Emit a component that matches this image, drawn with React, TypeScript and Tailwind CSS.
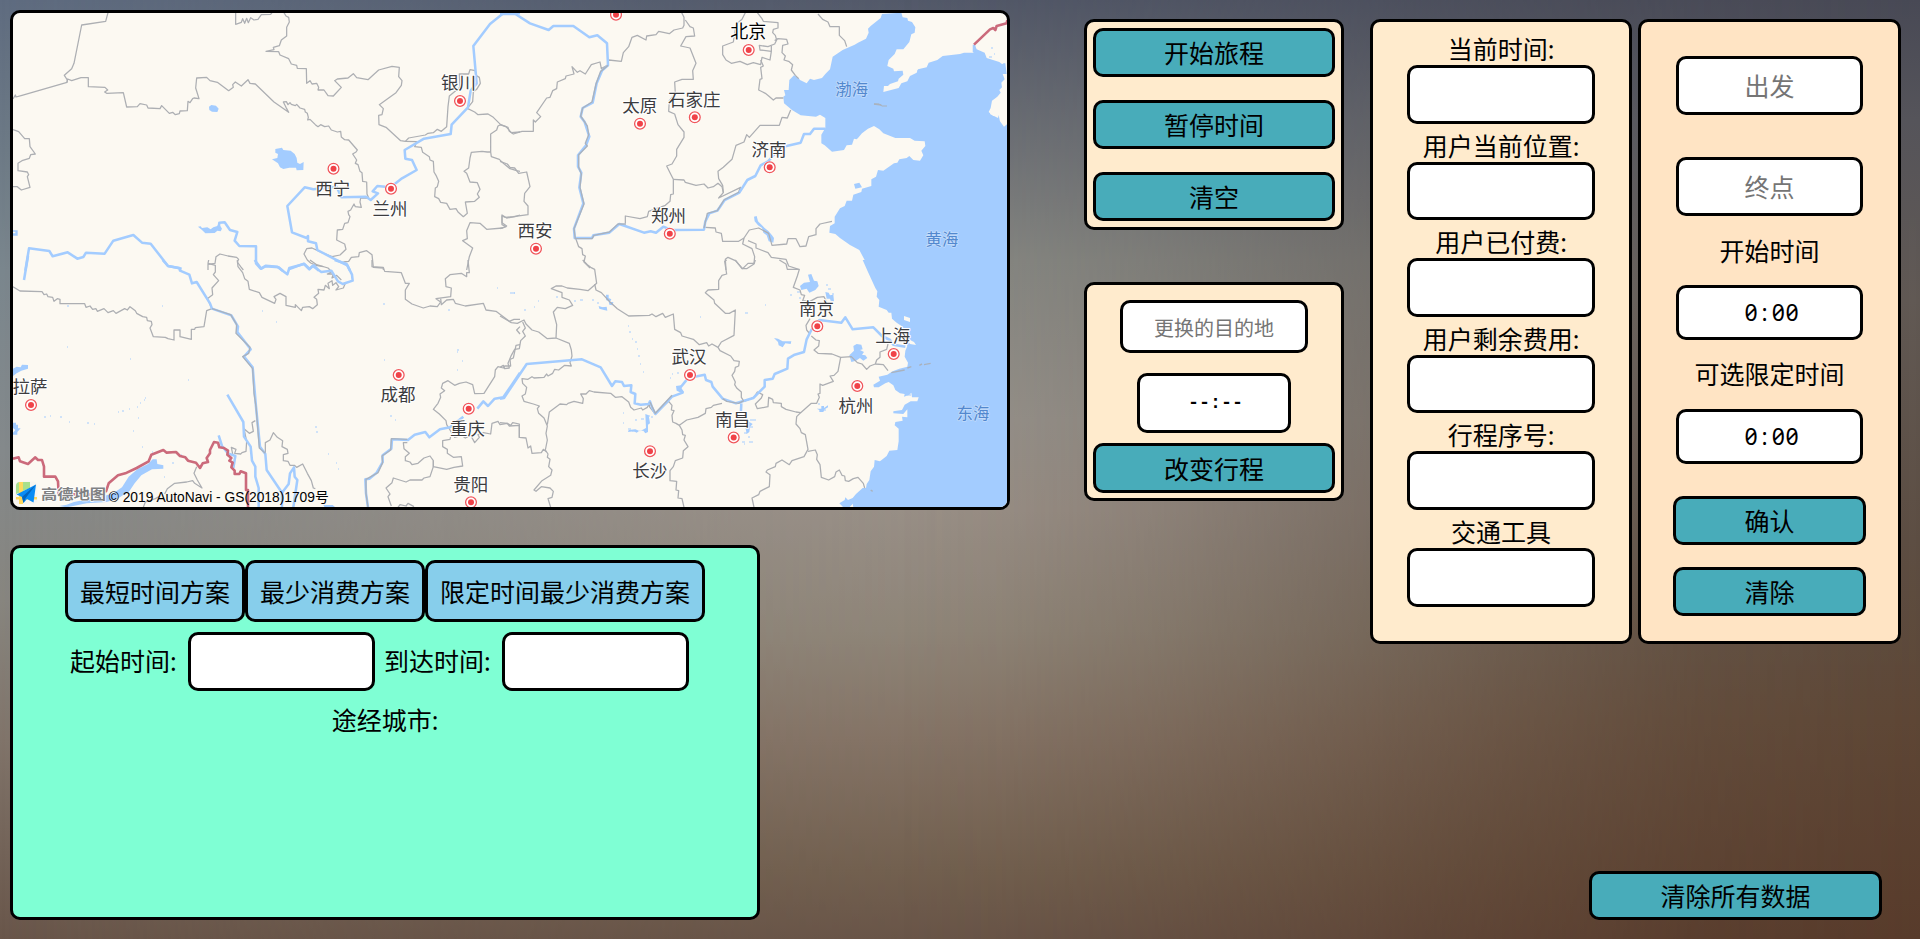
import React from "react";

const FONT = "font-['Noto_Sans','Noto_Sans_CJK_SC',sans-serif]";

/* ---------- Map data: every tile is drawn at 3x its size on screen ---------- */

type Tile = { at: string; sea: string[]; lakes: string[]; borders: string[]; rivers: string[]; shared: string[]; frontier: string[] };

const tiles: Tile[] = [
  {
    at: "translate(0 0) scale(0.333333)",
    sea: [],
    lakes: [
      "M627 320L634 315L648 317L656 326L652 336L636 335L628 330Z",
      "M826 447L846 443L850 450L872 452L884 462L890 474L892 488L900 492L911 486L910 510L890 511L888 503L868 503L850 507L840 502L834 490L816 478L832 474L834 462L826 458Z",
      "M594 680L602 679L606 684L622 682L632 688L640 682L652 678L656 670L666 686L662 694L652 692L644 699L616 700L606 690Z",
      "M39 691H53V707H39V700H46V695H39Z",
    ],
    borders: [
      "M324 38L317 64L245 75L222 190L215 206L193 226L202 240L201 247L66 286L48 291L46 285L39 297",
      "M201 247L203 237L215 242L243 233H265V260L315 262L323 270L314 276L320 280L370 278L380 321L412 320L420 311L440 315L444 324L480 326L485 317L508 340L518 337L526 344L538 341L540 333L562 332L564 304L570 308L578 296L582 294L597 296L587 264L590 234L620 232L630 242L652 247L686 272L700 262L698 254L706 246L724 258L744 239L750 250L766 252L822 306L866 337L858 322L850 306L859 305L864 314L870 308L874 313L886 317L890 313L900 324L914 328L916 336L922 340L925 352L923 360L930 358L946 374L954 380L962 374L974 380L986 378L994 390L1012 396L1022 394L1024 411L1034 419L1046 420L1072 450L1068 456L1058 462L1070 480L1066 490L1074 494L1080 514L1086 518L1088 544L1100 546L1101 582L1106 594L1082 594L1080 606L1084 622L1066 620L1062 612L1052 630L1044 634L1046 644L1050 650L1044 668L1034 670L1028 688L1012 690L1010 720L1034 732L1038 748L1020 765L996 770L966 758L936 744L920 746L912 762L922 780L932 789L948 796L970 800",
      "M707 38V73L724 67L728 56L734 70L740 55L745 68L752 53L762 60L774 58L784 44L812 43L816 38",
      "M852 38L858 48L866 52L868 66L860 82V108L844 120L838 137L820 142L822 149L798 154L836 155L840 165L866 176L874 192L890 196L892 205L919 206L920 250L930 242L936 252L950 250L956 262L954 270L972 270L984 287L1000 288L1024 262L1004 242L1012 237L1044 234L1060 221L1070 233L1104 239L1136 210L1176 199L1198 202L1196 230L1206 242L1204 256L1188 278L1166 294L1138 314L1150 326L1146 344L1136 346L1137 374L1158 382L1202 422L1216 424L1226 414L1276 405L1284 400L1300 398L1312 388L1324 394L1340 380L1344 320L1348 288L1380 262L1378 222H1406L1410 209L1426 212L1428 226L1438 232L1441 250L1430 268L1420 276L1418 305L1402 325L1424 336L1434 344L1464 342L1480 352L1502 374L1518 380L1534 398L1560 396",
      "M1216 424L1250 425L1244 440L1264 442L1268 457L1288 470L1290 480L1300 484L1302 516L1308 526L1316 544L1312 560L1306 564L1304 590L1316 596L1322 607L1340 610L1350 628L1368 626L1374 636L1390 650L1402 640L1396 606L1424 604L1438 592L1432 582L1440 568L1432 548L1410 546L1400 520L1392 514L1406 504L1410 474L1414 457L1446 454L1462 456L1472 456L1474 470L1498 478L1510 490L1530 506L1550 512L1560 514M1472 456V402L1490 390L1494 378L1502 374",
      "M1400 810L1408 770L1418 744L1388 722L1402 716L1400 692L1410 668L1440 670L1460 688L1508 684L1520 678L1506 668V645L1520 654L1545 650L1560 645",
      "M39 389L56 395L74 416L88 416L90 440L106 462L92 464L88 475L66 482L54 490V512L82 516L86 524L82 530L90 562L64 570L52 560H39",
      "M624 810V793L645 790L648 770L660 762L684 768L710 772L716 778L712 786L722 800L730 810",
      "M1030 786L1046 784L1054 772L1076 770L1078 758L1100 752L1116 764L1120 802L1150 804V810",
    ],
    rivers: [
      "M76 812L87 745L148 753L158 769L203 757L232 776L250 771L258 758L314 761L340 722L400 705L426 728L452 731L504 798L545 806",
      "M656 684L658 668L674 667L690 690L712 696L704 722L718 738L768 739V790L782 806L796 799L836 802L848 812M866 808L912 791L928 806L942 796L956 812",
      "M1050 812L1042 796L1000 775L952 750L948 730L924 724V708L920 714L876 697L862 618L914 562L940 568L1010 560L1024 592L1098 590L1112 600L1134 580L1118 574L1132 558L1172 562L1206 535L1250 510L1236 480L1216 476L1214 450L1272 416L1352 402L1355 374L1404 322L1412 272L1430 250L1420 138L1470 72L1510 40H1560",
    ],
    shared: [],
    frontier: [],
  },
  {
    at: "translate(500 0) scale(0.333333)",
    sea: [
      "M1204 38L1208 52L1222 54L1224 62L1236 66L1246 82L1244 98L1234 103L1228 126L1210 148H1190L1184 162L1166 180L1162 198L1180 206L1182 214L1208 212L1210 224L1196 236L1194 244L1170 252L1164 258L1152 258L1150 276L1196 264L1204 250L1222 244L1230 228L1250 218L1254 208L1280 202L1286 188L1312 180L1328 168L1380 162L1392 158H1420L1424 134L1430 148L1454 158L1460 174L1498 186L1506 192L1516 190L1520 222L1508 222L1514 238L1504 248L1506 262L1498 270L1502 278L1492 290L1476 302L1472 324L1466 336L1480 348L1496 346L1500 364L1512 380L1522 372V812H1104L1094 780L1078 750L1050 735L1020 714L1006 702L988 698L990 678L1004 670V650L1020 625L1034 618L1040 602L1056 602L1060 584L1084 576L1086 566L1114 558V538L1128 530L1134 510L1150 512L1182 490L1192 488L1198 478L1220 474L1228 468L1240 480L1260 482L1270 466L1264 452L1276 438L1274 424L1244 422L1230 414L1186 414L1150 400L1138 388L1122 378L1104 386L1086 400L1074 414L1070 418L1062 416L1056 434L1040 436L1032 450L996 455L974 436L964 430V404L976 384V354L960 344L948 350L902 346L876 330L852 310L850 290L856 286L852 270H866L868 240L882 226L896 234L900 240L920 250L930 236L942 240L966 234L976 222L990 208L998 170L1028 150L1064 134L1074 128L1098 116L1106 98L1104 86L1112 78L1142 54L1146 42Z",
    ],
    lakes: [
      "M762 650L770 648L774 664L786 676L794 684L806 694L816 706L822 714L820 728L806 724L800 706L790 698L786 684L774 676L764 664Z",
      "M1062 552L1078 548L1086 562L1066 566Z",
    ],
    borders: [
      "M545 38L552 52V76L548 84L522 90L508 101L476 94L468 104L440 108L438 120L412 106L396 112L386 140L370 158L364 184L326 180L322 196L304 206L300 186L274 194L256 222L240 212L232 217L216 200L222 222L198 228L196 236L172 246L170 266L158 272L150 292L140 294L110 338L122 350L106 366L100 360V394L66 394L40 402L28 394L24 382L0 374",
      "M556 60L570 80L580 84L584 108L558 110L542 138L570 144L588 190L578 212L580 238L546 238L524 246L526 280L508 302L506 334L524 342L534 374L552 396V412L530 448V468L516 492L500 498L510 518L520 538V582L512 584L510 604L496 616L446 634L442 650L420 656L376 648V670",
      "M520 538L552 540L556 547L588 556L612 552L624 564L640 560L654 550L666 560L670 578L656 594L722 562L714 580L674 600",
      "M670 578L668 556L656 536L654 514L670 502L696 478L708 436L732 426L740 404L748 412L780 376H838L846 352L862 354L872 330",
      "M736 38L726 58L712 70L706 88L700 126L668 138V164L678 180L694 190L720 184L742 194L760 188L782 194L786 172L810 180L814 154L780 150L778 136L804 140L824 132L830 120L826 106L818 98L820 88L834 84V68L790 64L786 56L772 38",
      "M782 180L790 198L782 202L786 236L780 238L776 270L796 280L806 288L820 300L828 294H850M824 122L834 116L860 118L864 132L848 136L846 158L856 168L852 180L866 184L878 194L874 210L886 226L896 236M814 154V138",
      "M954 42L968 58L984 66L990 80L1018 80V106L1034 122L1040 140",
      "M0 484L22 492L30 502L44 504L56 520L80 516L90 560L74 580L72 604L84 618V644L40 650L16 652L6 648V674L18 680L0 686",
      "M616 682L646 684L648 696L664 700L668 724L716 724L732 714L748 690L776 684L806 700L816 736L860 732L864 716H888L900 740L918 738L926 710L948 704V686L960 672L996 664",
      "M732 714L728 732L756 746L764 770L762 790L744 790L728 806L706 782L684 772L676 778L678 810M744 722L768 732L768 744L804 758L814 772L858 778L866 798L896 808",
      "M226 712L236 740L246 746L248 764L256 768L252 786L270 804",
    ],
    rivers: [
      "M0 42H46L90 70L146 90L160 78H220L268 112L292 106L321 130L324 196L306 212L290 250L278 308L248 324L242 350L254 366L268 410L258 436L234 466V500L244 518L238 562L250 610L222 686L224 714H276L280 706L328 698L358 672L432 698L452 694L468 698L490 680L514 690L612 689L616 664L628 640L652 632L674 600L718 578L742 540L766 528L782 496L804 484L824 462L850 440L902 428L912 402H930L942 386H976",
      "M1422 134V156",
    ],
    shared: [
      "M324 196L302 214L288 252L276 306L248 324L242 348L262 378L266 404L256 430L262 438L236 464V502L244 522L240 562L252 612L222 686L226 716H276L282 706L328 696L354 672L378 672",
      "M612 684L622 640L652 632L672 600L718 576",
      "M1122 312L1144 315",
    ],
    frontier: ["M1422 134L1470 88L1480 84L1486 90L1490 78L1520 70L1522 60"],
  },
  {
    at: "translate(0 260) scale(0.333333)",
    sea: [],
    lakes: [
      "M39 326L50 320L62 322L66 314L84 315V326L64 332L50 340L39 348Z",
      "M178 738L200 734L222 726L270 716L320 706L340 700L366 682L386 650L412 628L444 612L458 598H470L472 612L490 616V626L456 628L424 646L404 670L388 694L352 716L320 726L260 730L200 742Z",
      "M39 488H48V494H54V505H62L52 516V524H39V518L46 510L39 504Z",
      "M970 735H998L1006 742H974Z",
    ],
    borders: [
      "M39 80L60 93L126 95L132 104L140 102L144 110L158 112L162 124L172 116L180 118V131L254 131L258 142L270 138L278 148L288 146L292 154L312 146L324 158L340 152L348 160L374 146L382 150L390 140L406 152L410 160L428 170L440 172L442 182L454 184L456 194L450 204L460 230L496 232L504 236L522 240V210H540V230L574 238V208H584L586 203L612 200L616 176L620 152L636 146",
      "M626 0L624 10L646 16V36L640 44L656 62L636 84L638 104L622 116L636 146",
      "M712 0L714 20L728 38L734 56L744 64L748 88L778 98L786 112L824 130L828 118L822 110L840 100L858 110V136L886 142V134L904 152L908 142L928 140L938 146L952 134L950 118L942 112L956 100L954 88L972 90L976 76L988 86L984 70L996 62L998 76L1008 68L1016 80L1008 90L1030 84L1036 70",
      "M930 0L950 14L984 24L990 30L994 36L982 42L1000 42L996 54L1010 46L1024 60",
      "M1116 0V20L1150 22L1154 34L1204 38L1216 70L1228 70L1216 90V118L1236 132L1270 144L1290 138L1312 140L1322 126L1308 116L1352 110L1354 84L1338 80L1336 56L1350 44L1384 40L1400 50V38H1408L1404 0",
      "M1322 116L1324 134L1340 120L1360 118L1366 130L1396 138L1450 130L1458 150L1488 154L1528 184L1542 178H1560M1560 200L1550 210L1560 222M1560 254L1548 256L1540 294L1530 298L1532 318H1514L1510 324L1494 320L1486 330L1484 350L1452 400L1424 401L1418 374L1398 366L1378 370L1364 376L1344 362L1328 370L1324 384L1334 392L1320 402L1322 412L1314 430L1300 448L1318 462L1338 482L1340 494L1350 510L1356 520L1364 532L1384 526L1396 534L1412 526L1424 548L1438 532L1434 524L1450 518L1472 522L1476 490L1494 484L1500 494L1522 490L1528 498L1558 496V534",
      "M1352 530L1350 538L1328 542V560L1342 568V580L1360 592L1384 590L1388 618L1362 622L1340 628L1300 620V602L1290 588L1272 594L1254 610L1236 614L1230 606L1216 602V590L1228 580L1212 566L1210 548H1222",
      "M1300 602V620L1290 650L1272 654L1266 660H1230L1218 666L1180 654L1176 668L1158 684L1170 702L1164 710L1174 738",
      "M1194 742L1200 734L1218 738L1224 730L1242 740",
      "M796 580V548L810 540L820 518L832 532L848 542L846 560L862 568L864 580L850 584V602L864 604L870 616L884 616L890 622L908 612L916 628L922 640L934 662L940 684L946 686",
      "M766 482L756 488L760 514L748 520L732 506L740 544L738 574L726 578L722 582L704 580L708 568L694 562L698 582",
      "M494 702L502 686L524 670L560 666L578 662L584 670L606 684L592 660L582 640L590 620M430 742L436 726L466 716L480 708",
    ],
    rivers: [
      "M84 -12L72 60",
      "M488 0L504 18L538 24L540 32L568 44L576 70L590 66L630 130L636 146L694 166L714 200L712 216L752 268L732 290L758 322L768 440L780 560L796 582L800 630L846 698L866 672L870 640L882 622L884 650L892 660L880 742",
      "M764 0L784 26L798 17L832 20L862 43L868 24L912 12L928 28L938 18L964 36L994 32L1014 64L1028 72L1058 62L1056 44L1040 12L1004 0",
      "M682 404L730 486L732 530L752 560L756 602L766 620V650L776 684V742",
      "M656 526L666 558L684 580L706 588L700 624",
      "M846 690V742",
      "M1560 338L1510 412L1484 416L1464 438L1450 424L1432 446M1390 470L1350 502L1320 508L1288 532L1276 516L1244 524L1224 540L1176 538L1174 566L1148 586V606L1130 638L1108 656L1096 658L1098 700L1104 742",
    ],
    shared: [
      "M636 146L692 164L710 194L708 220L750 262L746 280L728 290L758 326L762 400L768 440L778 564L796 580",
      "M1222 538L1174 536L1172 570L1146 588L1148 608L1134 638L1098 658V700L1104 742",
    ],
    frontier: [
      "M39 596L56 592L60 604L84 612L106 592L114 600L126 600L132 620V650L166 650L174 664L176 702L206 704L240 702L246 708L318 694L326 670L354 646L376 640L410 624L446 604L454 584L490 570L500 578L528 576L540 588L556 592L564 602L588 608L600 624L608 610L624 606L620 594L630 580L630 570L642 546L654 548L658 562L672 564L684 572L682 584L694 594L688 602L698 608L694 622L704 632V642H718L722 634L738 640V690H744V742",
    ],
  },
  {
    at: "translate(500 260) scale(0.333333)",
    sea: [
      "M1088 0L1104 36L1126 84L1132 94L1130 110L1138 120L1136 140L1160 150L1166 158H1174L1176 176L1190 188L1208 200L1216 218L1212 238L1222 258L1216 272L1214 290L1224 308L1222 320L1198 326L1178 334L1162 344L1136 350L1140 362L1120 374L1122 382L1136 382L1156 370L1166 366L1180 376L1186 390L1200 400L1214 402L1212 410L1228 404L1234 398L1236 412L1256 412L1252 424L1232 424L1214 434L1206 450L1180 454V460L1210 462L1222 448V472L1206 470L1208 482L1186 486L1184 496L1196 506L1196 544L1192 570L1168 572L1160 588L1140 604L1124 600L1122 620L1112 634L1108 660L1100 672L1098 684L1088 684L1068 702L1056 716L1060 742H1522V0Z",
    ],
    lakes: [
      "M924 44L934 42L942 62L952 64L956 78L946 90L928 98L920 86L904 90L900 78L912 68L930 66Z",
      "M822 234L834 236L848 244L874 244L872 252L856 250L848 262L836 256L834 246Z",
      "M1060 258L1070 252L1084 254L1088 268L1080 270L1092 276L1086 284L1096 286L1102 294L1090 302L1080 294L1068 302L1054 306L1048 286L1062 272Z",
      "M1018 730L1034 720L1036 712L1044 720L1058 714L1060 730L1048 742H1030Z",
      "M738 480L748 486L758 492L750 500L748 516L740 522L736 500L726 490L724 470Z",
      "M436 462L446 466L450 490L444 494V516L436 520L430 512H418L410 518L402 514L384 516L386 510L406 508L420 514L438 504Z",
      "M976 96L986 98L990 106L1000 104L1002 124L992 122L990 116L980 116Z",
      "M318 104H326V114L334 118L330 126H340L338 136L328 134L326 124L318 120Z",
      "M296 138L308 142L320 140L322 152L312 150L298 146Z",
      "M528 378L544 376L540 386L552 394L546 400L530 392Z",
      "M950 446H964V438H972V444L984 436V442L974 448L970 456H958V450Z",
    ],
    borders: [
      "M248 0L262 14L272 22L284 28L290 70L264 92L240 88L202 84L186 78L168 78L154 86L186 98L186 112L208 120L218 136L196 146L172 142L160 156L170 194L168 234L142 236L116 216L96 210L78 192L72 180L52 190L34 188L0 168",
      "M168 234L208 250L214 270L216 288L210 308L214 318L194 316L176 330L164 328L158 340L144 348L140 342L132 352L102 354L96 350L84 358L66 356L68 370L80 382L76 402L66 408L72 424L100 432L118 438L112 446L116 460L132 474L142 498L138 520L142 540L136 570L144 582L142 592L150 598L146 620L156 630L152 646L126 662L102 690L108 694L124 680L150 684L160 694L156 712L144 716L152 742",
      "M68 186L76 204L68 214L76 228L62 242L58 266L44 268L34 286L24 310L28 324L14 326L10 316L0 322",
      "M284 72L288 90L304 98L330 126L352 146L386 168L448 166L456 162L468 170L488 160L496 172L520 162L524 208L542 218L546 228L580 238L598 254L620 248L626 258L636 252L654 262L664 246L702 226L706 150L688 160H676L644 130L642 120L616 98L624 90L656 88V62L666 46L680 42L674 4L680 0",
      "M654 262L660 272L692 288L702 302L718 304L716 318L706 322L704 334L696 346L706 366L704 374L710 384L724 396L724 412L732 424",
      "M706 0L726 26L740 26L762 12L766 0M838 0L858 12L862 28L898 28L892 48L880 82L900 90L904 104L914 106L908 122L930 124L952 112L972 110L980 126",
      "M930 176L918 196L920 210L930 222M934 228L948 240L958 242L956 258L942 270L954 280L996 282L1022 292L1054 290L1072 308L1086 312L1100 328L1110 318L1126 312L1150 314L1164 332M1126 312L1130 300L1140 292L1140 276L1160 268L1164 252",
      "M1022 292L1014 334L1002 346L990 348L1000 364L968 376L960 372V400L954 402L958 412L950 430L934 430L902 458L888 456L858 448L844 440L844 430L820 428L818 418L806 412L804 440L772 446L766 432L784 414L788 404L772 396L762 412L732 424",
      "M902 458L890 470L888 492L900 506L904 518L916 524L924 568L912 590L876 602L868 614L846 600L828 610L826 620L802 630L798 636L810 644L808 680L780 694L776 704L756 714L762 742",
      "M924 574L946 570L952 584L950 598L960 614L964 652L986 660L1004 650L1008 636L1018 630L1026 646L1034 648L1036 662L1046 664L1060 656L1074 652L1090 670L1094 684",
      "M142 494L148 456L180 432L200 434L204 430L222 424L248 430L250 416L242 402L258 402L268 392L282 396L332 400L346 412L366 410L386 426L392 442L402 450L424 444L428 450L442 442L450 426L448 440L466 462L506 424L516 436L514 450L522 452L516 466L518 486L528 490L538 496L546 510L548 524L556 526L552 540L564 560L550 572L548 594L526 602L520 620L510 632V662L530 664L528 690L536 692L534 714L546 716L552 742",
      "M538 496L560 480L594 472L616 460L618 446L634 442L640 436L666 430",
      "M0 488L22 490L32 496L38 488L58 492V532L78 534L84 564L92 558L96 580L124 578L130 568L140 576",
    ],
    rivers: [
      "M0 416L12 414L80 312L246 298L302 322L336 378L346 364L366 366L372 378L394 376L392 396L406 402L404 430L422 434L446 432L450 424L456 442L466 462L516 410L548 398L540 384L558 362L568 344L584 350L614 344L618 360L634 366L638 380L668 416L708 430L760 414L794 380V360L818 356L824 342L862 326L864 296L884 284L912 276L920 238L934 210L958 180L1024 188L1036 172L1058 208L1120 202L1146 228L1170 240L1180 254L1216 260",
      "M724 430L722 470",
    ],
    shared: ["M450 426L466 460L516 406M668 416L680 424L716 430L732 422", "M1174 338L1214 330M1222 324L1234 320M1258 316L1266 312M1272 314L1292 310M1112 690L1118 694"],
    frontier: [],
  },
];

/* Reservoirs and ponds only a pixel or two across. */
const specks =
  "M67 306h2M130 359h1M262 311h1M276 322h1M188 380h1M145 398h1M162 306h1M67 347h1M44 417h2M50 416h1M60 417h2M69 422h1M87 423h2M94 424h1M118 412h1M122 411h2M129 409h1M137 407h1M140 403h1M144 400h1M138 418h1M133 431h1M142 447h1M152 452h1M172 463h2M181 455h1M164 477h1M384 360h1M448 310h2M457 350h2M457 352h1M462 361h1M457 370h1M383 304h2M315 427h2M316 432h2M328 454h1M336 463h1M338 469h1M390 416h2M395 420h1M497 288h1M510 293h2M514 293h1M512 293h3M524 310h2M534 307h1M538 301h1M556 297h2M574 301h2M580 300h3M592 300h2M597 303h2M602 308h3M628 326h1M629 332h2M632 339h1M635 342h2M637 349h1M638 356h2M640 364h1M643 372h1M672 374h1M677 373h2M670 378h1M623 413h1M623 423h1M635 420h2M641 419h3M647 416h3M651 417h2M628 429h3M632 431h4M746 423h4M750 420h6M748 427h5M744 433h3M748 437h2M742 442h3M749 442h4M744 444h1M745 313h3M700 317h1M765 305h1M790 295h2M797 292h3M799 298h2M826 285h2M828 289h3M832 294h2M818 404h2M824 410h2M902 328h3M905 342h2M907 354h2M908 386h4M914 388h3M921 386h2M907 395h4M915 392h4M905 447h1M885 462h4M882 466h2M883 470h1M878 464h3M900 437h1M905 431h1M926 72h1M931 80h1M941 81h1M917 71h2M918 76h1M991 48h2M989 57h3M994 54h1M1003 64h2M985 116h4M990 124h3M995 130h4M985 126h2M896 178h1M996 257h1M1004 238h1";

const cities: { name: string; x: number; y: number; dx: number; dy: number }[] = [
  { name: "银川", x: 458.4, y: 83.3, dx: 460, dy: 101 },
  { name: "西宁", x: 332.7, y: 188.5, dx: 333.5, dy: 168.7 },
  { name: "兰州", x: 390, y: 208.7, dx: 391, dy: 188.7 },
  { name: "太原", x: 639.7, y: 106, dx: 640, dy: 123.7 },
  { name: "石家庄", x: 694.3, y: 100.3, dx: 694.8, dy: 117.3 },
  { name: "济南", x: 769, y: 149.8, dx: 769.7, dy: 167.3 },
  { name: "郑州", x: 668.5, y: 216, dx: 669.8, dy: 233.7 },
  { name: "西安", x: 535, y: 230.8, dx: 536, dy: 248.7 },
  { name: "拉萨", x: 30, y: 387.3, dx: 31, dy: 405 },
  { name: "成都", x: 398, y: 394.8, dx: 398.7, dy: 375 },
  { name: "重庆", x: 467.5, y: 429, dx: 468.7, dy: 408.7 },
  { name: "贵阳", x: 470.7, y: 485, dx: 471, dy: 502.3 },
  { name: "南京", x: 816.5, y: 308.7, dx: 817.3, dy: 326.3 },
  { name: "上海", x: 892.8, y: 336, dx: 893.7, dy: 354 },
  { name: "武汉", x: 689, y: 357.3, dx: 690, dy: 375 },
  { name: "南昌", x: 732.5, y: 420, dx: 733.7, dy: 437.5 },
  { name: "杭州", x: 856, y: 406, dx: 857.3, dy: 386 },
  { name: "长沙", x: 649.7, y: 470.8, dx: 650, dy: 451.2 },
];

const seas = [
  { name: "渤海", x: 851.7, y: 89 },
  { name: "黄海", x: 942, y: 239 },
  { name: "东海", x: 973, y: 412.7 },
];

function CityDot({ x, y }: { x: number; y: number }) {
  return (
    <g>
      <circle cx={x} cy={y} r={6.4} fill="#fff" />
      <circle cx={x} cy={y} r={5.4} fill="#fff" stroke="#f0575b" strokeWidth={1.3} />
      <circle cx={x} cy={y} r={3} fill="#f04248" />
    </g>
  );
}

function ChinaMap() {
  return (
    <svg viewBox="13 13 994 494" className="block h-full w-full" fill="none" strokeLinejoin="round">
      <rect x="13" y="13" width="994" height="494" fill="#fcf9f2" />
      {tiles.map((t) => (
        <g key={t.at} transform={t.at}>
          <g fill="#a3ccff">
            {[...t.sea, ...t.lakes].map((d) => (
              <path key={d} d={d} />
            ))}
          </g>
        </g>
      ))}
      <path d={specks} stroke="#a3ccff" strokeWidth={1} />
      {/* islands in the Bohai strait and the estuary */}
      <path d="M884 96h5l3 2h5" transform="translate(-10 8)" stroke="#a9b0b8" strokeWidth={1} />
      <path d="M904 316l6 2v4l-6-2zM906 338l8 4 2 3-6-1zM992 108l8 2-2 8-8-4z" fill="#fcf9f2" />
      {tiles.map((t) => (
        <g key={t.at} transform={t.at}>
          <g stroke="#adafb3" strokeWidth={3.8}>
            {t.borders.map((d) => (
              <path key={d} d={d} />
            ))}
          </g>
          <g stroke="#a3ccff" strokeWidth={7.6}>
            {t.rivers.map((d) => (
              <path key={d} d={d} />
            ))}
          </g>
          <g stroke="#a9b2be" strokeWidth={4.2}>
            {t.shared.map((d) => (
              <path key={d} d={d} />
            ))}
          </g>
          <g stroke="#cb6a7b" strokeWidth={7.8}>
            {t.frontier.map((d) => (
              <path key={d} d={d} />
            ))}
          </g>
        </g>
      ))}
      <CityDot x={616} y={14.7} />
      <CityDot x={748.7} y={50} />
      {cities.map((c) => (
        <CityDot key={c.name} x={c.dx} y={c.dy} />
      ))}
      <g
        className="font-['Noto_Sans_CJK_SC',sans-serif] text-[17.5px] font-normal"
        textAnchor="middle"
        fill="#3c3c3e"
        stroke="#fff"
        strokeWidth={2}
        style={{ paintOrder: "stroke" }}
      >
        {cities.map((c) => (
          <text key={c.name} x={c.x} y={c.y + 6}>
            {c.name}
          </text>
        ))}
        <text x={748.3} y={38} fill="#000" className="text-[18px]">
          北京
        </text>
      </g>
      <g
        className="font-['Noto_Sans_CJK_SC',sans-serif] text-[16.4px] font-normal"
        textAnchor="middle"
        fill="#5288cf"
        stroke="#c3dcfb"
        strokeWidth={1.6}
        style={{ paintOrder: "stroke" }}
      >
        {seas.map((s) => (
          <text key={s.name} x={s.x} y={s.y + 5.8}>
            {s.name}
          </text>
        ))}
      </g>
      {/* AutoNavi mark */}
      <g>
        <rect x="15" y="481.5" width="22.5" height="23" rx="5" fill="#f7f5f0" />
        <path d="M16 486q0-4 4-4l10 0v6l-14 6z" fill="#a8e08c" />
        <path d="M19 482h4v22h-4zM16 497h21v2.5h-21z" fill="#ffd95e" />
        <path d="M36 484.5L16.5 494.5L22 497L23.5 503L27 499L33.5 502.5Z" fill="#0a8cf5" />
        <path d="M36 484.5L22 497L23.5 503L25.5 498.2Z" fill="#0565bd" />
      </g>
      <text
        x="41"
        y="499"
        textLength="65"
        lengthAdjust="spacingAndGlyphs"
        className="font-['Noto_Sans_CJK_SC',sans-serif] text-[14px] font-bold"
        fill="#808183"
        stroke="#fff"
        strokeWidth={1.5}
        style={{ paintOrder: "stroke" }}
      >
        高德地图
      </text>
      <text
        x="108.7"
        y="501.8"
        textLength="220"
        lengthAdjust="spacingAndGlyphs"
        className="font-['Liberation_Sans','Noto_Sans_CJK_SC',sans-serif] text-[14px]"
        fill="#000"
      >
        © 2019 AutoNavi - GS(2018)1709号
      </text>
    </svg>
  );
}

/* ---------- Controls ---------- */

function Button({ children, className }: { children: React.ReactNode; className: string }) {
  return (
    <button
      className={`flex shrink-0 items-center justify-center rounded-[10px] border-[3px] border-black bg-[#48acba] pt-[2px] text-[25px] leading-none whitespace-nowrap ${className}`}
    >
      {children}
    </button>
  );
}

function Field({ className, placeholder }: { className: string; placeholder?: string }) {
  return (
    <input
      placeholder={placeholder}
      className={`block shrink-0 rounded-[10px] border-[3px] border-black bg-white text-center placeholder:text-[#757575] ${className}`}
    />
  );
}

function TimeField({ className }: { className: string }) {
  return (
    <div
      className={`flex h-[55px] w-[187px] shrink-0 items-center justify-center rounded-[10px] border-[3px] border-black bg-white pl-1 text-[23px] leading-none slashed-zero ${className}`}
    >
      <span className="w-[13.7px] text-center">0</span>
      <span className="w-[13.7px] text-center">:</span>
      <span className="w-[13.7px] text-center">0</span>
      <span className="w-[13.7px] text-center">0</span>
    </div>
  );
}

function PlanTab({ children, className }: { children: React.ReactNode; className: string }) {
  return (
    <button
      className={`h-[62px] shrink-0 rounded-[10px] border-[3px] border-black bg-[#87ceeb] pt-[2px] text-[25px] leading-none whitespace-nowrap ${className}`}
    >
      {children}
    </button>
  );
}

const statusLabels = ["当前时间:", "用户当前位置:", "用户已付费:", "用户剩余费用:", "行程序号:", "交通工具"];

function Backdrop() {
  return (
    <div className="absolute inset-0 -z-10 bg-[linear-gradient(180deg,#5f6c80_0px,#6d7a86_150px,#7a868d_270px,#84898b_450px,#87857f_600px,#80746a_740px,#69564a_939px)]">
      <div className="absolute inset-0 bg-[linear-gradient(180deg,#525868_0px,#707377_150px,#868782_260px,#96918a_420px,#998f86_510px,#8f8578_630px,#847365_740px,#72604f_870px,#695548_939px)] [mask-image:linear-gradient(90deg,transparent_0px,rgba(0,0,0,0.85)_750px,#000_1000px)]" />
      <div className="absolute inset-0 bg-[linear-gradient(180deg,#484955_0px,#55545a_120px,#605853_300px,#5c4d42_540px,#5d4635_720px,#583b2b_939px)] [mask-image:linear-gradient(90deg,transparent_900px,rgba(0,0,0,0.05)_1000px,rgba(0,0,0,0.2)_1150px,rgba(0,0,0,0.42)_1320px,rgba(0,0,0,0.66)_1500px,rgba(0,0,0,0.88)_1700px,#000_1920px)]" />
    </div>
  );
}

export default function App() {
  return (
    <main className={`relative isolate flex h-[939px] w-[1920px] overflow-hidden text-black ${FONT}`}>
      <Backdrop />

      <div className="flex w-[1074px] shrink-0 flex-col gap-[35px] pt-[10px] pl-[10px]">
        <section className="h-[500px] w-[1000px] shrink-0 overflow-hidden rounded-[10px] border-[3px] border-black">
          <ChinaMap />
        </section>

        <section className="h-[375px] w-[750px] shrink-0 rounded-[10px] border-[3px] border-black bg-[#7fffd4] pt-3">
          <div className="flex justify-center">
            <PlanTab className="w-[180px]">最短时间方案</PlanTab>
            <PlanTab className="w-[180px]">最少消费方案</PlanTab>
            <PlanTab className="w-[280px]">限定时间最少消费方案</PlanTab>
          </div>
          <div className="mt-[10px] flex items-center pl-[57px] text-[25px] leading-none">
            <span className="w-[118px]">起始时间:</span>
            <Field className="h-[59px] w-[187px]" />
            <span className="ml-[9px] w-[118px]">到达时间:</span>
            <Field className="h-[59px] w-[187px]" />
          </div>
          <p className="mt-[10px] text-center text-[25px] leading-[38px]">途经城市:</p>
        </section>
      </div>

      <div className="flex w-[296px] shrink-0 flex-col gap-[52px] pt-[19px] pl-[10px]">
        <section className="flex h-[211px] w-[260px] flex-col items-center gap-[23px] rounded-[10px] border-[3px] border-black bg-[#ffebcd] pt-[6px]">
          <Button className="h-[49px] w-[242px]">开始旅程</Button>
          <Button className="h-[49px] w-[242px]">暂停时间</Button>
          <Button className="h-[49px] w-[242px]">清空</Button>
        </section>
        <section className="flex h-[219px] w-[260px] flex-col items-center rounded-[10px] border-[3px] border-black bg-[#ffebcd] pt-[15px]">
          <Field className="h-[53px] w-[188px] pt-1 text-[20px]" placeholder="更换的目的地" />
          <div className="mt-5 flex h-[60px] w-[154px] shrink-0 items-center justify-center rounded-[10px] border-[3px] border-black bg-white pt-[3px] pl-[3px] font-['Liberation_Mono',monospace] text-[18.4px] leading-none font-bold">
            --:--
          </div>
          <Button className="mt-[10px] h-[50px] w-[242px]">改变行程</Button>
        </section>
      </div>

      <div className="flex grow flex-col justify-between pt-[19px] pb-[19px]">
        <div className="flex gap-[6px]">
          <section className="flex h-[625px] w-[262px] flex-col items-center rounded-[10px] border-[3px] border-black bg-[#ffebcd] pt-[5px]">
            {statusLabels.map((label) => (
              <label key={label} className="flex h-[96.6px] shrink-0 flex-col items-center">
                <span className="h-[38px] text-[25px] leading-[45px] whitespace-nowrap">{label}</span>
                <Field className="h-[58.6px] w-[188px]" />
              </label>
            ))}
          </section>

          <section className="flex h-[625px] w-[263px] flex-col items-center rounded-[10px] border-[3px] border-black bg-[#ffe4c4] pt-[34px]">
            <Field className="h-[59px] w-[187px] text-[25px]" placeholder="出发" />
            <Field className="mt-[42px] h-[59px] w-[187px] text-[25px]" placeholder="终点" />
            <span className="mt-[15px] text-[25px] leading-[40px]">开始时间</span>
            <TimeField className="mt-[14px]" />
            <span className="mt-[14px] text-[25px] leading-[40px]">可选限定时间</span>
            <TimeField className="mt-[15px]" />
            <Button className="mt-8 h-[49px] w-[193px]">确认</Button>
            <Button className="mt-[22px] h-[49px] w-[193px]">清除</Button>
          </section>
        </div>

        <Button className="mr-[38px] h-[49px] w-[293px] self-end">清除所有数据</Button>
      </div>
    </main>
  );
}
